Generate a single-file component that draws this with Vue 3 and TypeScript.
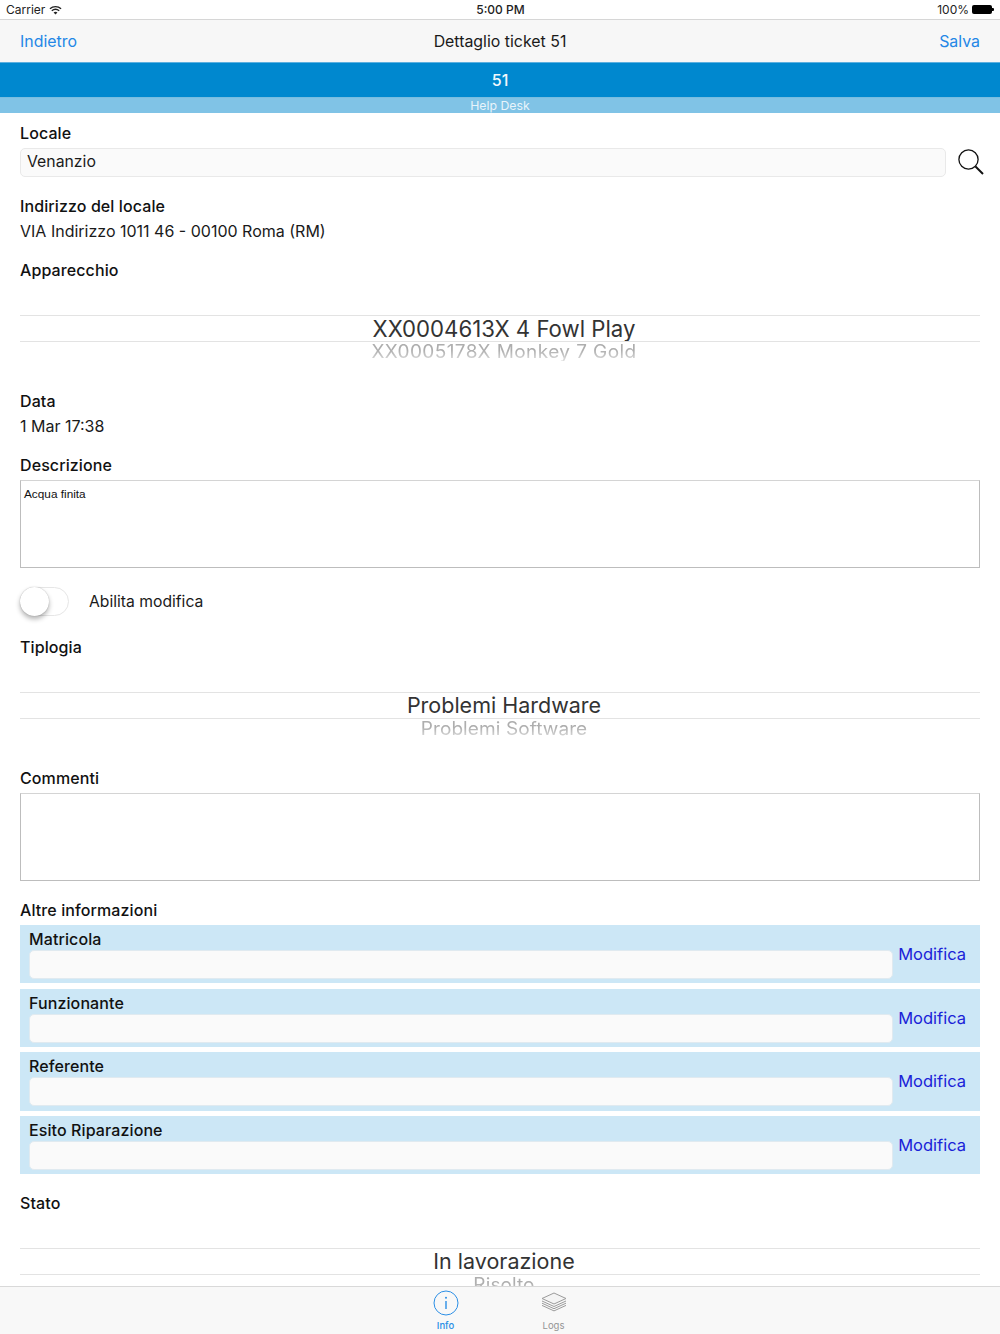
<script setup lang="ts">
const infoRows: string[] = ['Matricola', 'Funzionante', 'Referente', 'Esito Riparazione']
</script>

<template>
  <div class="screen">
    <header class="status">
      <div class="status-left">
        <span>Carrier</span>
        <svg width="13" height="10" viewBox="0 0 14 10" fill="none" stroke="#222" stroke-width="1.5">
          <path d="M1 3.6C4.4 .6 9.6 .6 13 3.6" />
          <path d="M3 5.8C5.3 3.9 8.7 3.9 11 5.8" />
          <path d="M7 9.8 4.9 7.6C6.1 6.6 7.9 6.6 9.1 7.6Z" fill="#222" stroke="none" />
        </svg>
      </div>
      <span class="status-time">5:00 PM</span>
      <div class="status-right">
        <span>100%</span>
        <span class="battery"><i></i></span>
      </div>
    </header>

    <nav class="nav">
      <a class="nav-link">Indietro</a>
      <span class="nav-title">Dettaglio ticket 51</span>
      <a class="nav-link nav-link-end">Salva</a>
    </nav>

    <div class="band-dark">51</div>
    <div class="band-light">Help Desk</div>

    <main class="content">
      <h2 class="label l-locale">Locale</h2>
      <div class="search-row">
        <div class="input value input-lifted">Venanzio</div>
        <svg class="search" width="27" height="28" viewBox="0 0 27 28" fill="none" stroke="#111">
          <circle cx="11.5" cy="11.5" r="9.6" stroke-width="1.3" />
          <path d="M18.5 18.5 26 26" stroke-width="2" />
        </svg>
      </div>

      <h2 class="label l-address">Indirizzo del locale</h2>
      <p class="value text-line">VIA Indirizzo 1011 46 - 00100 Roma (RM)</p>

      <h2 class="label l-next">Apparecchio</h2>
      <div class="picker picker-codes">
        <div class="picker-main">XX0004613X 4 Fowl Play</div>
        <div class="picker-next">XX0005178X Monkey 7 Gold</div>
      </div>

      <h2 class="label l-data">Data</h2>
      <p class="value text-line">1 Mar 17:38</p>

      <h2 class="label l-next">Descrizione</h2>
      <div class="textarea"><span class="textarea-text">Acqua finita</span></div>

      <div class="toggle-row">
        <span class="toggle"><span class="knob"></span></span>
        <span class="value toggle-text">Abilita modifica</span>
      </div>

      <h2 class="label l-tipologia">Tiplogia</h2>
      <div class="picker">
        <div class="picker-main">Problemi Hardware</div>
        <div class="picker-next">Problemi Software</div>
      </div>

      <h2 class="label l-data">Commenti</h2>
      <div class="textarea"></div>

      <h2 class="label l-altre">Altre informazioni</h2>
      <div class="info-list">
        <section v-for="row in infoRows" :key="row" class="info-row">
          <div class="info-field">
            <h3 class="label info-label">{{ row }}</h3>
            <div class="input"></div>
          </div>
          <a class="modify">Modifica</a>
        </section>
      </div>

      <h2 class="label l-stato">Stato</h2>
      <div class="picker">
        <div class="picker-main">In lavorazione</div>
        <div class="picker-next">Risolto</div>
      </div>
    </main>

    <footer class="tabs">
      <div class="tab tab-active">
        <div class="tab-icon">
          <svg width="26" height="26" viewBox="0 0 26 26" fill="none" stroke="#2b8fe6">
            <circle cx="13" cy="13" r="12" stroke-width="1" />
            <path d="M13 11v8" stroke-width="1.4" />
            <circle cx="13" cy="7.8" r="1" fill="#2b8fe6" stroke="none" />
          </svg>
        </div>
        <span>Info</span>
      </div>
      <div class="tab">
        <div class="tab-icon">
          <svg class="logs-icon" width="26" height="22" viewBox="0 0 26 22" fill="none" stroke="#9b9b9b" stroke-width="1">
            <path d="M13 2 25 7.5 13 13 1 7.5Z" fill="#f4f4f4" />
            <path d="M1 10 13 15.5 25 10" />
            <path d="M1 12.2 13 17.7 25 12.2" />
            <path d="M1 14.4 13 19.9 25 14.4" />
          </svg>
        </div>
        <span>Logs</span>
      </div>
    </footer>
  </div>
</template>

<style>
html, body { margin: 0; padding: 0; background: #fff; }
</style>

<style scoped>
.screen {
  width: 1000px;
  height: 1334px;
  display: flex;
  flex-direction: column;
  overflow: hidden;
  background: #fff;
  font-family: Inter, "Noto Sans", "Liberation Sans", sans-serif;
  color: #111;
}
.status {
  height: 19px;
  flex: none;
  display: grid;
  grid-template-columns: 1fr auto 1fr;
  align-items: center;
  padding: 0 8px 0 6px;
  font-size: 12px;
  color: #222;
  background: #fff;
}
.status-left { display: flex; align-items: center; gap: 4px; }
.status-time { font-weight: 500; padding-left: 3px; }
.status-right { display: flex; align-items: center; justify-content: flex-end; gap: 3px; }
.battery {
  width: 20px;
  height: 9px;
  background: #000;
  border-radius: 2px;
  position: relative;
  display: block;
}
.battery i {
  position: absolute;
  right: -2px;
  top: 3px;
  width: 2px;
  height: 3px;
  background: #000;
  border-radius: 0 1px 1px 0;
}
.nav {
  height: 44px;
  flex: none;
  box-sizing: border-box;
  border-top: 1px solid #d6d6d6;
  border-bottom: 1px solid #5cb0e0;
  display: grid;
  grid-template-columns: 1fr auto 1fr;
  align-items: center;
  padding: 0 20px;
  background: #f7f7f7;
  font-size: 15.9px;
}
.nav-link { color: #2487e6; }
.nav-link-end { text-align: right; }
.nav-title { color: #1a1a1a; }
.band-dark {
  height: 34px;
  flex: none;
  background: #0088cf;
  color: #f2f8fc;
  font-size: 16px;
  font-weight: 500;
  display: flex;
  align-items: center;
  justify-content: center;
}
.band-light {
  height: 16px;
  flex: none;
  background: #80c3e6;
  border-top: 1px solid #78bde0;
  box-sizing: border-box;
  color: #e8f4fb;
  font-size: 12.3px;
  display: flex;
  align-items: center;
  justify-content: center;
}
.content {
  flex: 1;
  min-height: 0;
  overflow: hidden;
  padding: 0 20px;
}
.label {
  margin: 0;
  font-size: 16px;
  font-weight: 500;
  line-height: 20px;
  letter-spacing: .1px;
  color: #111;
}
.value { font-size: 15.8px; color: #1a1a1a; }
.text-line { margin: 5px 0 0; line-height: 20px; font-size: 16px; }
.toggle-text { font-size: 15.7px; }
.l-locale { margin-top: 10px; }
.l-address { margin-top: 19px; }
.l-next { margin-top: 19px; }
.l-data { margin-top: 30px; }
.l-tipologia { margin-top: 21px; }
.l-altre { margin-top: 19px; }
.l-stato { margin-top: 19px; }
.search-row {
  display: flex;
  align-items: center;
  gap: 11px;
  margin-top: 5px;
  margin-right: -4px;
}
.search { flex: none; margin-top: -1px; }
.input {
  flex: 1;
  height: 29px;
  box-sizing: border-box;
  background: #fafafa;
  border: 1px solid #e9e9e9;
  border-radius: 5px;
  padding: 0 6px;
  display: flex;
  align-items: center;
}
.input-lifted { padding-bottom: 3px; }
.picker {
  height: 46px;
  margin-top: 35px;
  position: relative;
  overflow: hidden;
  border-top: 1px solid #e3e3e3;
  text-align: center;
  box-sizing: border-box;
  padding-left: 8px;
}
.picker::before {
  content: "";
  position: absolute;
  left: 0;
  right: 0;
  top: 25px;
  height: 1px;
  background: #e3e3e3;
}
.picker-main {
  height: 26px;
  line-height: 25px;
  font-size: 21.5px;
  color: #333;
}
.picker-next {
  font-size: 19px;
  line-height: 19px;
  letter-spacing: .1px;
  color: #aeaeae;
  transform: scaleY(.95);
  transform-origin: top;
  margin-top: 1px;
  -webkit-mask-image: linear-gradient(#000 40%, rgba(0, 0, 0, .4));
  mask-image: linear-gradient(#000 40%, rgba(0, 0, 0, .4));
}
.picker-codes .picker-main { font-size: 22.2px; }
.picker-codes .picker-next { letter-spacing: .42px; }
.textarea {
  height: 88px;
  margin-top: 5px;
  box-sizing: border-box;
  border: 1px solid #bdbdbd;
  border-top-color: #d4d4d4;
  padding: 4px 3px;
  line-height: 14px;
}
.textarea-text {
  font-family: "Liberation Sans", Arial, sans-serif;
  font-size: 11.8px;
  color: #111;
}
.toggle-row {
  display: flex;
  align-items: center;
  gap: 20px;
  margin-top: 19px;
  height: 29px;
}
.toggle {
  width: 49px;
  height: 29px;
  box-sizing: border-box;
  border: 1px solid #e6e6e6;
  border-radius: 15px;
  position: relative;
  display: block;
}
.knob {
  position: absolute;
  left: -1px;
  top: -1px;
  width: 29px;
  height: 29px;
  border-radius: 50%;
  background: #fff;
  box-shadow: 0 3px 5px rgba(0, 0, 0, .3), 0 0 1px rgba(0, 0, 0, .3);
}
.info-list {
  display: flex;
  flex-direction: column;
  gap: 5.33px;
  margin-top: 5px;
}
.info-row {
  height: 58.33px;
  box-sizing: border-box;
  background: #cce7f6;
  display: flex;
  padding: 5px 14px 0 9px;
  gap: 5px;
}
.info-field {
  flex: 1;
  display: flex;
  flex-direction: column;
}
.info-label { line-height: 19px; margin-bottom: 1px; }
.info-field .input {
  flex: none;
  border-color: #e0eaf0;
  background: #fafafa;
}
.modify {
  font-size: 16.5px;
  line-height: 20px;
  color: #1a22d8;
  margin-top: 14px;
}
.tabs {
  height: 48px;
  flex: none;
  box-sizing: border-box;
  border-top: 1px solid #d9d9d9;
  background: #f8f8f8;
  display: flex;
  justify-content: center;
  gap: 56px;
  padding-right: 1px;
}
.tab {
  width: 52px;
  display: flex;
  flex-direction: column;
  align-items: center;
  font-size: 9.5px;
  line-height: 12px;
  color: #949494;
  padding-top: 3px;
  box-sizing: border-box;
  gap: 4px;
}
.tab-icon { height: 26px; }
.tab-icon svg { display: block; }
.logs-icon { margin-top: 1px; }
.tab-active { color: #2b8fe6; font-weight: 500; }
</style>
